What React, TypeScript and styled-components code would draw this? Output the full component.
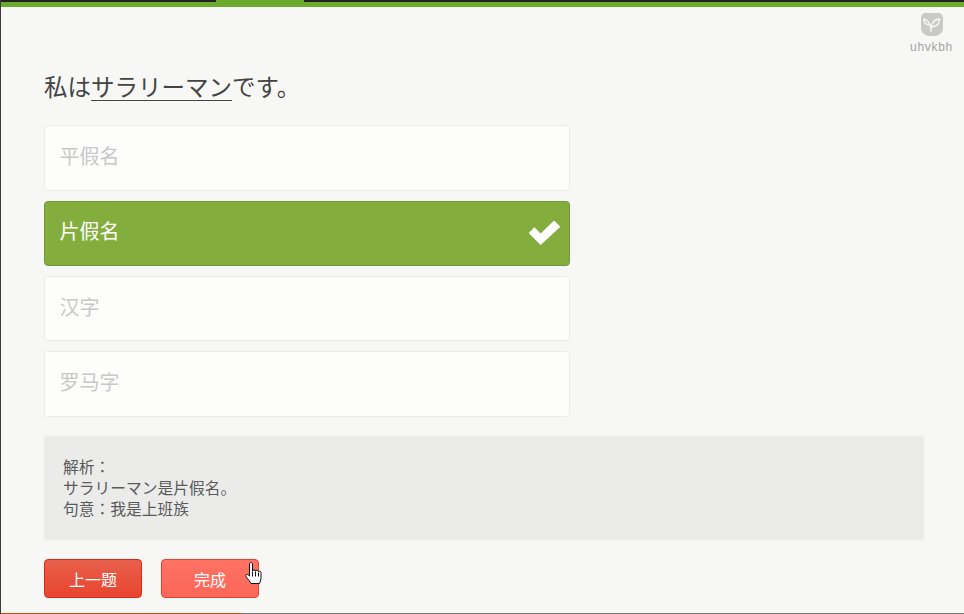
import React from 'react';
import styled, { createGlobalStyle } from 'styled-components';

const FONT = `"Liberation Sans", Arial, "Noto Sans CJK SC", sans-serif`;

const options = [
  { label: '平假名', selected: false },
  { label: '片假名', selected: true },
  { label: '汉字', selected: false },
  { label: '罗马字', selected: false },
];

const App: React.FC = () => (
  <>
    <GlobalStyle />
    <Page>
      <TopBar>
        <TopTrack />
        <TopProgress />
        <TopTrackRest />
      </TopBar>
      <Main>
        <Badge>
          <svg width="22" height="23" viewBox="0 0 22 23">
            <path
              d="M5 0h12c3 0 5 2 5 5v10c0 4-4 8-8 8H8c-4 0-8-4-8-8V5c0-3 2-5 5-5Z"
              fill="#c9c9c7"
            />
            <path
              d="M10 19c0-3 0-5-1-7M9 12C8 9 6 7 3 6c0 4 2 6 6 6ZM10.500 15c0-3 1-5 2-6 1.500-2 4-3 6-3 0 4-2 7-7 8"
              fill="none"
              stroke="#f7f7f6"
              strokeWidth="1.4"
            />
          </svg>
          <BadgeName>uhvkbh</BadgeName>
        </Badge>
        <Question>
          私は<Underlined>サラリーマン</Underlined>です。
        </Question>
        <OptionList>
          {options.map((option) => (
            <Option key={option.label} selected={option.selected}>
              {option.label}
              {option.selected && (
                <Check width="35" height="25" viewBox="0 0 34 26">
                  <path d="M0.5 13.5 L6.5 7.5 L13 14 L27 0.5 L33.5 7 L13 26 Z" fill="#fff" />
                </Check>
              )}
            </Option>
          ))}
        </OptionList>
        <Analysis>
          解析<Colon>：</Colon>
          <br />
          サラリーマン是片假名。
          <br />
          句意<Colon>：</Colon>我是上班族
        </Analysis>
        <Buttons>
          <PrevButton>上一题</PrevButton>
          <DoneButton>
            完成
            <Cursor width="17" height="26" viewBox="0 0 17 25">
              <path
                d="M4.500 2.500c0-2 3-2 3 0v7c0-1.500 3-1.500 3 0 0-1 3-1 3 .5 0-.7 2.500-.5 2.500 1v6c0 2-1 3-1.500 5H6c-1-2-3-4-5-7-1-2 1-3 3.500-.5Z"
                fill="#fff"
                stroke="#111"
                strokeWidth="1"
              />
              <path d="M7.500 10v5M10.500 10v5M13.500 11v4" stroke="#111" strokeWidth="1" fill="none" />
            </Cursor>
          </DoneButton>
        </Buttons>
      </Main>
      <BottomEdge />
    </Page>
  </>
);

export default App;

const GlobalStyle = createGlobalStyle`
  html, body {
    margin: 0;
    height: 100%;
    background: #f7f7f6;
  }
`;

const Page = styled.div`
  width: 964px;
  height: 614px;
  display: flex;
  flex-direction: column;
  overflow: hidden;
  box-sizing: border-box;
  border-left: 1px solid #3a3a3a;
  background: #f7f7f6;
  font-family: ${FONT};
`;

const TopBar = styled.div`
  flex: none;
  height: 7px;
  display: flex;
  background: #6aaa2c;
`;

const TopTrack = styled.div`
  width: 215px;
  height: 2px;
  background: #222;
`;

const TopProgress = styled.div`
  width: 88px;
`;

const TopTrackRest = styled.div`
  flex: 1;
  height: 2px;
  background: #222;
`;

const Main = styled.div`
  flex: 1;
  position: relative;
  padding: 64px 40px 0 43px;
`;

const Badge = styled.div`
  position: absolute;
  top: 6px;
  right: 11px;
  display: flex;
  flex-direction: column;
  align-items: center;
`;

const BadgeName = styled.span`
  font-family: "Liberation Sans", sans-serif;
  font-size: 12px;
  line-height: 14px;
  letter-spacing: 0.7px;
  color: #a4a4a4;
  margin-top: 4px;
`;

const Question = styled.div`
  font-size: 23.5px;
  line-height: 34px;
  color: #444;
`;

const Underlined = styled.span`
  display: inline-block;
  line-height: 23px;
  border-bottom: 1px solid #444;
`;

const OptionList = styled.div`
  width: 526px;
  margin-top: 20.3px;
  display: flex;
  flex-direction: column;
  gap: 10px;
`;

const Option = styled.div<{ selected: boolean }>`
  position: relative;
  box-sizing: border-box;
  height: 65.33px;
  padding: 0 0 5px 14.5px;
  display: flex;
  align-items: center;
  font-size: 20px;
  border-radius: 4px;
  border: 1px solid ${({ selected }) => (selected ? '#6f9a35' : '#ececea')};
  background: ${({ selected }) => (selected ? '#83ae3e' : '#fdfdfc')};
  color: ${({ selected }) => (selected ? '#fff' : '#c8c8c8')};
`;

const Check = styled.svg`
  position: absolute;
  right: 7px;
  top: 18px;
`;

const Analysis = styled.div`
  margin-top: 19.4px;
  box-sizing: border-box;
  height: 104px;
  padding: 21px 19px;
  background: #ebebea;
  border-radius: 4px;
  font-size: 15.75px;
  line-height: 21px;
  color: #5a5a5a;
`;

const Colon = styled.span`
  font-family: "Noto Sans CJK TC", sans-serif;
  line-height: 0;
`;

const Buttons = styled.div`
  margin-top: 19px;
  display: flex;
  gap: 19px;
`;

const PrevButton = styled.button`
  position: relative;
  width: 98px;
  height: 39px;
  padding: 0;
  border: 1px solid #dc2a17;
  border-radius: 4px;
  background: linear-gradient(#e8604c, #e8452f);
  color: #fff;
  font-family: ${FONT};
  font-size: 16px;
`;

const DoneButton = styled(PrevButton)`
  border-color: #e8412e;
  background: linear-gradient(#ff7264, #fb6759);
`;

const Cursor = styled.svg`
  position: absolute;
  right: -4px;
  top: 1px;
`;

const BottomEdge = styled.div`
  flex: none;
  height: 1px;
  background: linear-gradient(to right, #b8550f 240px, #777 240px);
`;
